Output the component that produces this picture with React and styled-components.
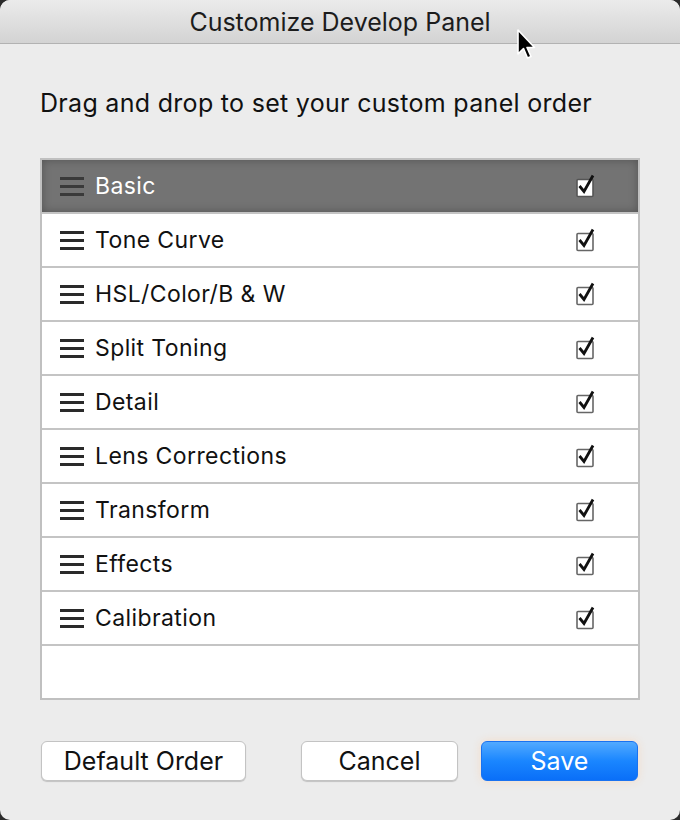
import React from "react";
import styled, { createGlobalStyle } from "styled-components";

const Global = createGlobalStyle`
  html, body {
    margin: 0;
    padding: 0;
    background: #2b2b2b;
  }
  * { box-sizing: border-box; }
`;

const Window = styled.div`
  position: relative;
  width: 680px;
  height: 820px;
  background: #ececec;
  border-radius: 10px;
  overflow: hidden;
  font-family: Inter, "Liberation Sans", sans-serif;
  color: #111;
  display: flex;
  flex-direction: column;
`;

const TitleBar = styled.div`
  height: 44px;
  flex: none;
  display: flex;
  align-items: center;
  justify-content: center;
  background: linear-gradient(#ebebeb, #d3d3d3);
  border-bottom: 1px solid #b2b2b2;
  font-size: 25px;
  color: #1c1c1c;
`;

const Body = styled.div`
  padding: 42px 40px 0 40px;
  display: flex;
  flex-direction: column;
`;

const Intro = styled.p`
  margin: 0 0 38px 0;
  font-size: 25px;
  line-height: 34px;
  letter-spacing: 0.3px;
`;

const List = styled.div`
  border: 2px solid #c0c0c0;
  background: #fff;
  display: flex;
  flex-direction: column;
`;

const Row = styled.div`
  height: 54px;
  display: flex;
  align-items: center;
  padding: 0 40px 0 18px;
  border-bottom: 2px solid #c4c4c4;
  background: ${(p) => (p.$active ? "#737373" : "#fff")};
  box-shadow: ${(p) =>
    p.$active ? "inset 0 0 10px rgba(0, 0, 0, 0.28)" : "none"};
  color: ${(p) => (p.$active ? "#fff" : "#111")};
  &:last-child {
    border-bottom: none;
    height: 52px;
  }
`;

const Label = styled.span`
  flex: 1;
  margin-left: 11px;
  font-size: 23px;
  letter-spacing: 0.4px;
  margin-top: -1px;
`;

const Grip = styled.span`
  width: 24px;
  height: 19px;
  display: flex;
  flex-direction: column;
  justify-content: space-between;
  margin-top: 1px;
  & > i {
    display: block;
    height: 3px;
    background: ${(p) => (p.$active ? "#3a3a3a" : "#2a2a2a")};
  }
`;

const Buttons = styled.div`
  display: flex;
  align-items: center;
  margin-top: 41px;
  padding: 0 1px;
`;

const Button = styled.button`
  height: 40px;
  width: ${(p) => p.$w}px;
  margin-left: ${(p) => p.$ml || 0}px;
  border-radius: 6px;
  font-family: Inter, "Liberation Sans", sans-serif;
  font-size: 25px;
  color: #111;
  background: #fff;
  border: 1px solid #c3c3c3;
  box-shadow: 0 1px 1px rgba(0, 0, 0, 0.18);
  padding: 0;
`;

const SaveButton = styled(Button)`
  color: #fff;
  border: 1px solid #1a72f0;
  background: linear-gradient(#52aaff, #1a86ff 50%, #0a6ff8);
  box-shadow: 0 0 8px rgba(255, 200, 150, 0.45);
`;

const Cursor = styled.svg`
  position: absolute;
  left: 516px;
  top: 28px;
`;

const Check = ({ active }) => (
  <svg width="24" height="26" viewBox="0 0 24 26">
    <rect
      x="3"
      y="6.5"
      width="16"
      height="17"
      rx="1"
      fill="#fff"
      stroke={active ? "#555" : "#666"}
      strokeWidth="1.6"
    />
    <path
      d="M5.5 13 L10 18.5 L19 2.5"
      fill="none"
      stroke="#111"
      strokeWidth="2.8"
      strokeLinejoin="miter"
    />
  </svg>
);

const panels = [
  "Basic",
  "Tone Curve",
  "HSL/Color/B & W",
  "Split Toning",
  "Detail",
  "Lens Corrections",
  "Transform",
  "Effects",
  "Calibration",
];

export default function App() {
  return (
    <>
      <Global />
      <Window>
        <TitleBar>Customize Develop Panel</TitleBar>
        <Body>
          <Intro>Drag and drop to set your custom panel order</Intro>
          <List>
            {panels.map((name, i) => (
              <Row key={name} $active={i === 0}>
                <Grip $active={i === 0}>
                  <i />
                  <i />
                  <i />
                </Grip>
                <Label>{name}</Label>
                <Check active={i === 0} />
              </Row>
            ))}
            <Row />
          </List>
          <Buttons>
            <Button $w={205}>Default Order</Button>
            <Button $w={157} $ml={55}>Cancel</Button>
            <SaveButton $w={157} $ml={23}>Save</SaveButton>
          </Buttons>
        </Body>
        <Cursor width="22" height="34" viewBox="0 0 22 34">
          <path
            d="M2 2 L2 26 L7.5 20.5 L11.5 30 L15 28.5 L11 19.5 L18.5 19.5 Z"
            fill="#000"
            stroke="#fff"
            strokeWidth="1.6"
            strokeLinejoin="round"
          />
        </Cursor>
      </Window>
    </>
  );
}
